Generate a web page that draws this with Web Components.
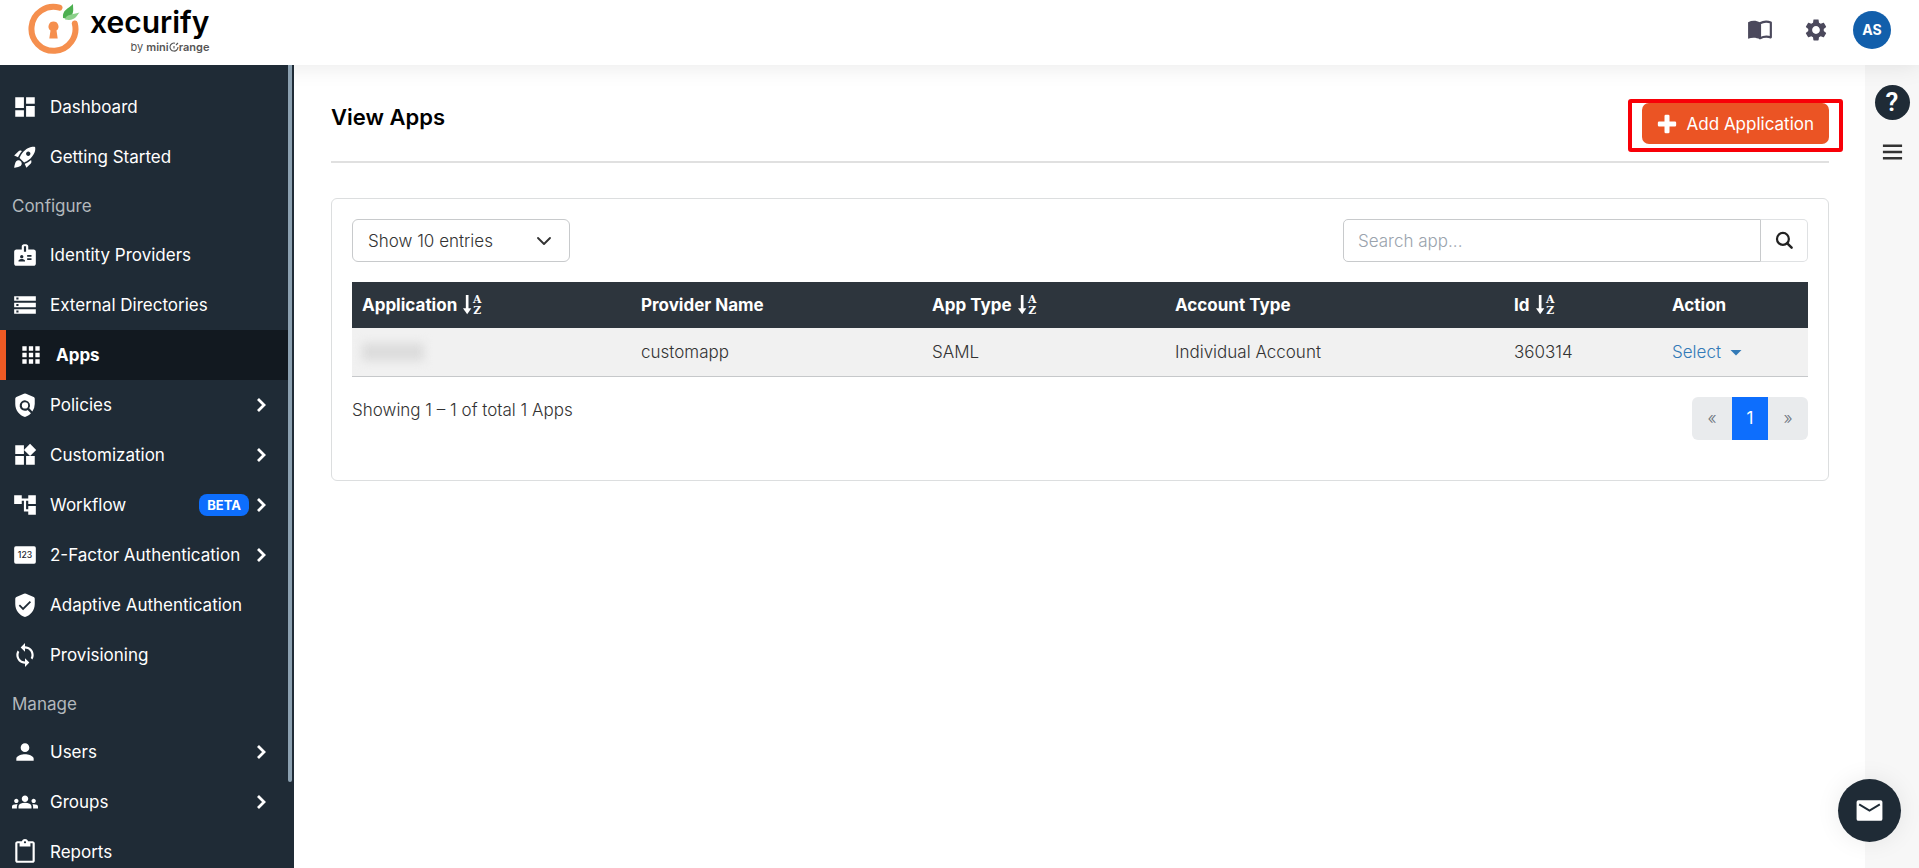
<!DOCTYPE html>
<html lang="en">
<head>
<meta charset="utf-8">
<meta name="viewport" content="width=device-width, initial-scale=1">
<title>View Apps</title>
<style>
  body { margin: 0; font-family: Inter, "Noto Sans", sans-serif; font-size: 16px; color: #333; background: #fff; }
</style>
</head>
<body>
<admin-shell>
  <top-bar slot="header"></top-bar>
  <side-nav slot="nav">
    <nav-item icon="dashboard">Dashboard</nav-item>
    <nav-item icon="rocket">Getting Started</nav-item>
    <nav-heading>Configure</nav-heading>
    <nav-item icon="badge">Identity Providers</nav-item>
    <nav-item icon="storage">External Directories</nav-item>
    <nav-item icon="apps" active>Apps</nav-item>
    <nav-item icon="policy" expandable>Policies</nav-item>
    <nav-item icon="widgets" expandable>Customization</nav-item>
    <nav-item icon="tree" expandable badge="BETA">Workflow</nav-item>
    <nav-item icon="pin" expandable>2-Factor Authentication</nav-item>
    <nav-item icon="shield">Adaptive Authentication</nav-item>
    <nav-item icon="sync">Provisioning</nav-item>
    <nav-heading>Manage</nav-heading>
    <nav-item icon="person" expandable>Users</nav-item>
    <nav-item icon="groups" expandable>Groups</nav-item>
    <nav-item icon="clipboard">Reports</nav-item>
  </side-nav>
  <page-heading>View Apps</page-heading>
  <panel-card>
    <list-toolbar></list-toolbar>
    <apps-table></apps-table>
    <list-footer>Showing 1 – 1 of total 1 Apps</list-footer>
  </panel-card>
  <tool-rail slot="rail"></tool-rail>
  <mail-button slot="floating"></mail-button>
</admin-shell>

<script>
const P = d => `<path d="${d}"/>`;
const ICONS = {
  dashboard: P('M3 13h8V3H3v10zm0 8h8v-6H3v6zm10 0h8V11h-8v10zm0-18v6h8V3h-8z'),
  rocket: P('M9.19 6.35c-2.04 2.29-3.44 5.58-3.57 5.89L2 10.69l4.05-4.05c.47-.47 1.15-.68 1.81-.55l1.33.26zM11.17 17s3.74-1.55 5.89-3.7c5.4-5.4 4.5-9.62 4.21-10.57-.95-.3-5.17-1.19-10.57 4.21C8.55 9.09 7 12.83 7 12.83L11.17 17zm6.48-2.19c-2.29 2.04-5.58 3.44-5.89 3.57L13.31 22l4.05-4.05c.47-.47.68-1.15.55-1.81l-.26-1.33zM9 18c0 .83-.34 1.58-.88 2.12C6.94 21.3 2 22 2 22s.7-4.94 1.88-6.12A2.996 2.996 0 0 1 9 18zm4-9c0-1.1.9-2 2-2s2 .9 2 2-.9 2-2 2-2-.9-2-2z'),
  badge: P('M20 7h-5V4c0-1.1-.9-2-2-2h-2c-1.1 0-2 .9-2 2v3H4c-1.1 0-2 .9-2 2v11c0 1.1.9 2 2 2h16c1.1 0 2-.9 2-2V9c0-1.1-.9-2-2-2zM9 12c.83 0 1.5.67 1.5 1.5S9.83 15 9 15s-1.5-.67-1.5-1.5S8.17 12 9 12zm3 6H6v-.75c0-1 2-1.5 3-1.5s3 .5 3 1.5V18zm1-9h-2V4h2v5zm5 7.5h-4V15h4v1.5zm0-3h-4V12h4v1.5z'),
  storage: P('M2 20h20v-4H2v4zm2-3h2v2H4v-2zM2 4v4h20V4H2zm4 3H4V5h2v2zm-4 7h20v-4H2v4zm2-3h2v2H4v-2z'),
  apps: P('M4 8h4V4H4v4zm6 12h4v-4h-4v4zm-6 0h4v-4H4v4zm0-6h4v-4H4v4zm6 0h4v-4h-4v4zm6-10v4h4V4h-4zm-6 4h4V4h-4v4zm6 6h4v-4h-4v4zm0 6h4v-4h-4v4z'),
  policy: P('M20 4.6l-7-3.1a2.4 2.4 0 0 0-2 0L4 4.6A1.8 1.8 0 0 0 3 6.2V11c0 5.55 3.84 10.74 9 12 2.1-.5 4-1.7 5.5-3.3l-3.1-3.1a4.8 4.8 0 1 1 1.5-1.5l2.9 2.9A12.6 12.6 0 0 0 21 11V6.2c0-.7-.4-1.3-1-1.6z') + '<circle cx="12" cy="12.4" r="2.9"/>',
  widgets: P('M13 13v8h8v-8h-8zM3 21h8v-8H3v8zM3 3v8h8V3H3zm13.66-1.31L11 7.34 16.66 13l5.66-5.66-5.66-5.65z'),
  tree: P('M22 11V3h-7v3H9V3H2v8h7V8h2v10h4v3h7v-8h-7v3h-2V8h2v3z'),
  pin: '<rect x="2" y="4" width="20" height="16" rx="1.5"/><text x="12" y="15" text-anchor="middle" font-family="Inter, sans-serif" font-size="8" font-weight="500" fill="#1f2b36">123</text>',
  shield: P('M20 4.6l-7-3.1a2.4 2.4 0 0 0-2 0L4 4.6A1.8 1.8 0 0 0 3 6.2V11c0 5.55 3.84 10.74 9 12 5.16-1.26 9-6.45 9-12V6.2c0-.7-.4-1.3-1-1.6z') + '<path d="M6.8 12.2l3.4 3.4 6.8-6.8" fill="none" stroke="#1f2b36" stroke-width="1.6"/>',
  sync: P('M12 4V1L8 5l4 4V6c3.31 0 6 2.69 6 6 0 1.01-.25 1.97-.7 2.8l1.46 1.46C19.54 15.03 20 13.57 20 12c0-4.42-3.58-8-8-8zm0 14c-3.31 0-6-2.69-6-6 0-1.01.25-1.97.7-2.8L5.24 7.74C4.46 8.97 4 10.43 4 12c0 4.42 3.58 8 8 8v3l4-4-4-4v3z'),
  person: P('M12 12c2.21 0 4-1.79 4-4s-1.79-4-4-4-4 1.79-4 4 1.79 4 4 4zm0 2c-2.67 0-8 1.34-8 4v2h16v-2c0-2.66-5.33-4-8-4z'),
  groups: P('M12 12.75c1.63 0 3.07.39 4.24.9 1.08.48 1.76 1.56 1.76 2.73V18H6v-1.61c0-1.18.68-2.26 1.76-2.73 1.17-.52 2.61-.91 4.24-.91zM4 13c1.1 0 2-.9 2-2s-.9-2-2-2-2 .9-2 2 .9 2 2 2zm1.13 1.1C4.76 14.04 4.39 14 4 14c-.99 0-1.93.21-2.78.58C.48 14.9 0 15.62 0 16.43V18h4.5v-1.61c0-.83.23-1.61.63-2.29zM20 13c1.1 0 2-.9 2-2s-.9-2-2-2-2 .9-2 2 .9 2 2 2zm4 3.43c0-.81-.48-1.53-1.22-1.85-.85-.37-1.79-.58-2.78-.58-.39 0-.76.04-1.13.1.4.68.63 1.46.63 2.29V18H24v-1.57zM12 6c1.66 0 3 1.34 3 3s-1.34 3-3 3-3-1.34-3-3 1.34-3 3-3z'),
  clipboard: P('M19 2h-4.18C14.4.84 13.3 0 12 0c-1.3 0-2.4.84-2.82 2H5c-1.1 0-2 .9-2 2v16c0 1.1.9 2 2 2h14c1.1 0 2-.9 2-2V4c0-1.1-.9-2-2-2zm-7 0c.55 0 1 .45 1 1s-.45 1-1 1-1-.45-1-1 .45-1 1-1zm7 18H5V4h2v3h10V4h2v16z'),
  chevron: '<path d="M9 6l6 6-6 6" fill="none" stroke="currentColor" stroke-width="2.8"/>',
  down: '<path d="M3 7.500l9 9 9-9" fill="none" stroke="currentColor" stroke-width="2.8" stroke-linecap="round" stroke-linejoin="round"/>',
  book: '<path d="M1 4.8C4.800 3 8.600 3.200 12 5v15.500c-3.400-1.700-7.200-1.900-11-.5z"/><path d="M12 5.800c3.300-1.900 6.700-2 10-.7v13.700c-3.300-1.100-6.700-.9-10 .8z" fill="none" stroke="currentColor" stroke-width="2" stroke-linejoin="round"/>',
  gear: P('M19.14 12.94c.04-.3.06-.61.06-.94 0-.32-.02-.64-.07-.94l2.03-1.58c.18-.14.23-.41.12-.61l-1.92-3.32c-.12-.22-.37-.29-.59-.22l-2.39.96c-.5-.38-1.03-.7-1.62-.94l-.36-2.54c-.04-.24-.24-.41-.48-.41h-3.84c-.24 0-.43.17-.47.41l-.36 2.54c-.59.24-1.13.57-1.62.94l-2.39-.96c-.22-.08-.47 0-.59.22L2.74 8.87c-.12.21-.08.47.12.61l2.03 1.58c-.05.3-.09.63-.09.94s.02.64.07.94l-2.03 1.58c-.18.14-.23.41-.12.61l1.92 3.32c.12.22.37.29.59.22l2.39-.96c.5.38 1.03.7 1.62.94l.36 2.54c.05.24.24.41.48.41h3.84c.24 0 .44-.17.47-.41l.36-2.54c.59-.24 1.13-.56 1.62-.94l2.39.96c.22.08.47 0 .59-.22l1.92-3.32c.12-.22.07-.47-.12-.61l-2.01-1.58zM12 15.6c-1.98 0-3.6-1.62-3.6-3.6s1.62-3.6 3.6-3.6 3.6 1.62 3.6 3.6-1.62 3.6-3.6 3.6z'),
  plus: '<path d="M9 2.500a1.500 1.500 0 0 1 1.500-1.500h3a1.500 1.500 0 0 1 1.500 1.500V9h6.500a1.500 1.500 0 0 1 1.500 1.500v3a1.500 1.500 0 0 1-1.500 1.500H15v6.500a1.500 1.500 0 0 1-1.500 1.500h-3A1.500 1.500 0 0 1 9 21.500V15H2.500A1.500 1.500 0 0 1 1 13.500v-3A1.500 1.500 0 0 1 2.500 9H9z"/>',
  search: '<circle cx="10" cy="10" r="7.500" fill="none" stroke="currentColor" stroke-width="2.800"/><path d="M15.500 15.500l5.500 5.500" stroke="currentColor" stroke-width="3.200" stroke-linecap="round"/>',
  menu: '<path d="M2 5.500h20M2 12h20M2 18.500h20" stroke="currentColor" stroke-width="2.400"/>',
  mail: '<rect x="2" y="4" width="20" height="16" rx="1.500"/><path d="M4 7.200l8 4.800 8-4.800" fill="none" stroke="#1f2b36" stroke-width="1.500"/>',
  sort: '<path d="M5 0v18" stroke="currentColor" stroke-width="3.200"/><path d="M0 16h10l-5 7z"/><g font-family="DejaVu Serif, serif" font-weight="700" font-size="13" text-anchor="middle"><text x="17" y="10">A</text><text x="17" y="23">Z</text></g>',
  caret: P('M1 8h22l-11 11z'),
};

const define = (name, html) => customElements.define(name, class extends HTMLElement {
  connectedCallback() {
    if (this.shadowRoot) return;
    const root = this.attachShadow({ mode: 'open' });
    const t = document.createElement('template');
    t.innerHTML = `<style>*{box-sizing:border-box} button,input,select{font:inherit;color:inherit;margin:0}</style>` +
      (typeof html === 'function' ? html(this) : html);
    root.append(t.content.cloneNode(true));
  }
});

define('ui-icon', el => `<style>
  :host { display: inline-flex; flex: none; width: 26px; height: 26px; }
  svg { width: 100%; height: 100%; fill: currentColor; overflow: visible; }
</style><svg viewBox="0 0 24 24" aria-hidden="true">${ICONS[el.getAttribute('name')]}</svg>`);

define('admin-shell', `<style>
  :host { display: grid; grid-template: 65px minmax(0, 1fr) / 294px minmax(0, 1fr) 54px; height: 100vh; overflow: hidden; position: relative; }
  header { grid-column: 1 / -1; background: #fff; box-shadow: 0 0 24px rgba(0,0,0,.1); z-index: 1; }
  .nav { z-index: 2; min-height: 0; }
  main { padding: 37px 36px 24px 37px; overflow: hidden; }
  .rail { background: #f7f7f7; }
  .floating { position: absolute; right: 18px; bottom: 26px; z-index: 3; }
</style>
<header><slot name="header"></slot></header>
<div class="nav"><slot name="nav"></slot></div>
<main><slot></slot></main>
<aside class="rail"><slot name="rail"></slot></aside>
<div class="floating"><slot name="floating"></slot></div>`);

define('brand-logo', `<style>
  :host { display: block; }
  a { display: flex; align-items: flex-end; gap: 10px; color: #000; text-decoration: none; }
  .mark { width: 52px; height: 54px; }
  .words { display: flex; flex-direction: column; align-items: flex-end; }
  .name { font: 600 30px/36px Inter, sans-serif; }
  .by { display: flex; align-items: center; font: 400 11px/14px Inter, sans-serif; color: #555; }
  b { font-weight: 600; }
  .o { width: 10px; height: 10px; }
</style>
<a href="#home">
<svg class="mark" viewBox="0 0 52 54" aria-hidden="true">
  <path d="M31.500 7.700A22 22 0 1 0 46.800 23.500" fill="none" stroke="#f58f4e" stroke-width="6" stroke-linecap="round"/>
  <path d="M25.500 21.500a5 5 0 0 1 3 9l1.200 8h-8.400l1.200-8a5 5 0 0 1 3-9z" fill="#f58f4e"/>
  <path d="M35 18c-1-8 5-9 10-14 0 5 1 7-1 11-2 3-5 4-9 3z" fill="#4caf50"/>
  <path d="M37 19.500c1-5 7-5 14.500-7-3 3-4 9-14.500 7z" fill="#8bd08a"/>
</svg>
<span class="words"><span class="name">xecurify</span>
<span class="by">by&nbsp;<b>mini</b><svg class="o" viewBox="0 0 10 10" aria-hidden="true"><path d="M6 1.200A4 4 0 1 0 9 5M5 4v2.500M7 3l2-2" fill="none" stroke="#555" stroke-width="1.100"/></svg><b>range</b></span></span>
</a>`);

define('top-bar', `<style>
  :host { display: flex; align-items: flex-start; justify-content: space-between; padding: 0 28px 0 28px; }
  .tools { display: flex; align-items: center; gap: 23px; padding-top: 11px; }
  button { border: 0; background: none; padding: 0; display: flex; color: #4b495c; cursor: pointer; }
  .gear { padding: 0 1px; margin-left: 6px; }
  .avatar { width: 38px; height: 38px; border-radius: 50%; background: #125fab; color: #fff; align-items: center; justify-content: center; font: 700 14px/20px Inter, sans-serif; }
</style>
<brand-logo></brand-logo>
<div class="tools">
  <button aria-label="Documentation"><ui-icon name="book"></ui-icon></button>
  <button class="gear" aria-label="Settings"><ui-icon name="gear"></ui-icon></button>
  <button class="avatar">AS</button>
</div>`);

define('side-nav', `<style>
  :host { display: block; height: 100%; background: #1f2b36; position: relative; overflow: hidden; }
  nav { height: 100%; padding: 17px 6px 0 0; overflow: hidden; }
  .thumb { position: absolute; top: 0; right: 2px; width: 4px; height: calc(90% - 6px); background: #8ba0b0; border-radius: 0 0 2px 2px; }
</style>
<nav aria-label="Main"><slot></slot></nav><div class="thumb"></div>`);

define('nav-heading', `<style>
  :host { display: flex; align-items: center; height: 48px; padding-left: 12px; font-size: 17px; line-height: 24px; color: #b3b8bc; }
  :host(:last-of-type) { height: 47px; }
</style><slot></slot>`);

define('nav-item', el => `<style>
  :host { display: block; }
  a { display: flex; align-items: center; height: 50px; padding: 0 15px 0 12px; color: #fff; text-decoration: none; font-size: 17px; line-height: 24px; white-space: nowrap; }
  .label { margin-left: 12px; flex: 1; }
  .beta { background: #0d6efd; border-radius: 8px; font-weight: 700; font-size: 13px; line-height: 22px; padding: 0 8px; }
  .arrow { width: 24px; height: 24px; }
  :host([active]) a { background: #121920; border-left: 6px solid #ee5a24; font-weight: 700; }
</style>
<a href="#${el.getAttribute('icon')}"><ui-icon name="${el.getAttribute('icon')}"></ui-icon><span class="label"><slot></slot></span>${
  el.hasAttribute('badge') ? `<span class="beta">${el.getAttribute('badge')}</span>` : ''}${
  el.hasAttribute('expandable') ? '<ui-icon class="arrow" name="chevron"></ui-icon>' : ''}</a>`);

define('page-heading', `<style>
  :host { display: flex; justify-content: space-between; align-items: flex-start; height: 59px; border-bottom: 2px solid #e0e0e0; margin-bottom: 35px; }
  h1 { margin: 0; font-size: 22px; line-height: 30px; font-weight: 600; color: #000; }
  .marked { position: relative; margin-top: 1px; }
  .marked::after { content: ""; position: absolute; inset: -4px -14px -8px; border: 4px solid #f80008; border-radius: 3px; pointer-events: none; }
  button { display: flex; align-items: center; gap: 10px; height: 41px; padding: 0 15px; border: 0; border-radius: 7px; background: #eb5424; color: #fff; font-size: 17px; line-height: 24px; cursor: pointer; }
  ui-icon { width: 20px; height: 20px; }
</style>
<h1><slot></slot></h1>
<div class="marked"><button><ui-icon name="plus"></ui-icon>Add Application</button></div>`);

define('panel-card', `<style>
  :host { display: block; border: 1px solid #dcdedf; border-radius: 6px; padding: 20px 20px 40px; }
</style><slot></slot>`);

define('list-toolbar', `<style>
  :host { display: flex; justify-content: space-between; margin-bottom: 20px; font-size: 17px; line-height: 24px; }
  .pick { position: relative; width: 218px; }
  select { appearance: none; width: 100%; height: 43px; padding: 0 15px; border: 1px solid #c8cacc; border-radius: 6px; background: #fff; font-weight: 300; }
  .pick ui-icon { position: absolute; right: 18px; top: 14px; width: 16px; height: 16px; pointer-events: none; }
  form { display: flex; width: 465px; }
  input { flex: 1; min-width: 0; height: 43px; padding: 0 14px; border: 1px solid #c8cacc; border-radius: 5px 0 0 5px; font-weight: 300; }
  input::placeholder { color: #9aa3ad; opacity: 1; }
  button { width: 47px; height: 43px; display: flex; align-items: center; justify-content: center; border: 1px solid #dfe1e3; border-left: 0; border-radius: 0 5px 5px 0; background: #fff; color: #222; }
  button ui-icon { width: 19px; height: 19px; }
</style>
<div class="pick"><select aria-label="Entries per page"><option>Show 10 entries</option><option>Show 25 entries</option></select><ui-icon name="down"></ui-icon></div>
<form role="search"><input type="text" aria-label="Search app" placeholder="Search app..."><button type="button" aria-label="Search"><ui-icon name="search"></ui-icon></button></form>`);

define('apps-table', `<style>
  :host { display: block; font-size: 17px; line-height: 24px; }
  table { width: 100%; table-layout: fixed; border-collapse: collapse; }
  th { height: 46px; padding: 0 10px; background: #2d353d; color: #fff; text-align: left; font-weight: 700; white-space: nowrap; }
  td { height: 48px; padding: 0 10px; background: #f1f1f1; border-bottom: 1px solid #c6c8ca; font-weight: 300; }
  th span { display: flex; align-items: center; gap: 6px; }
  th ui-icon { width: 20px; height: 20px; }
  .hidden { display: block; width: 62px; height: 18px; background: #dcdcdc; filter: blur(5px); }
  button { display: flex; align-items: center; gap: 9px; padding: 0; border: 0; background: none; color: #337ab7; font-weight: 300; cursor: pointer; }
  button ui-icon { width: 12px; height: 12px; }
</style>
<table>
<colgroup><col style="width:279px"><col style="width:291px"><col style="width:243px"><col style="width:339px"><col style="width:158px"><col></colgroup>
<thead><tr><th><span>Application<ui-icon name="sort"></ui-icon></span></th><th>Provider Name</th><th><span>App Type<ui-icon name="sort"></ui-icon></span></th><th>Account Type</th><th><span>Id<ui-icon name="sort"></ui-icon></span></th><th>Action</th></tr></thead>
<tbody><tr><td><span class="hidden"></span></td><td>customapp</td><td>SAML</td><td>Individual Account</td><td>360314</td><td><button>Select<ui-icon name="caret"></ui-icon></button></td></tr></tbody>
</table>`);

define('list-footer', `<style>
  :host { display: flex; justify-content: space-between; align-items: flex-start; margin-top: 20px; font-size: 17px; line-height: 26px; font-weight: 300; }
  ul { display: flex; list-style: none; margin: 0; padding: 0; border-radius: 6px; overflow: hidden; }
  a { display: flex; align-items: center; justify-content: center; width: 40px; height: 43px; background: #e9ebed; color: #6c757d; text-decoration: none; }
  .on { width: 36px; background: #0d6efd; color: #fff; font-weight: 400; }
</style>
<span><slot></slot></span>
<ul><li><a href="#prev">«</a></li><li><a class="on" href="#1">1</a></li><li><a href="#next">»</a></li></ul>`);

define('tool-rail', `<style>
  :host { display: flex; flex-direction: column; align-items: center; gap: 20px; padding-top: 20px; }
  button { display: flex; align-items: center; justify-content: center; border: 0; padding: 0; background: none; color: #333; cursor: pointer; }
  .help { width: 35px; height: 35px; border-radius: 50%; background: #1f2b36; color: #fff; font: 600 26px/35px Roboto, sans-serif; }
  ui-icon { width: 23px; height: 24px; }
</style>
<button class="help" aria-label="Help">?</button>
<button aria-label="Menu"><ui-icon name="menu"></ui-icon></button>`);

define('mail-button', `<style>
  :host { display: block; }
  button { display: flex; align-items: center; justify-content: center; width: 63px; height: 63px; border: 0; border-radius: 50%; background: #1f2b36; color: #fff; box-shadow: 0 0 24px rgba(0,0,0,.08); }
  ui-icon { width: 31px; height: 31px; }
</style><button aria-label="Send mail"><ui-icon name="mail"></ui-icon></button>`);
</script>
</body>
</html>
